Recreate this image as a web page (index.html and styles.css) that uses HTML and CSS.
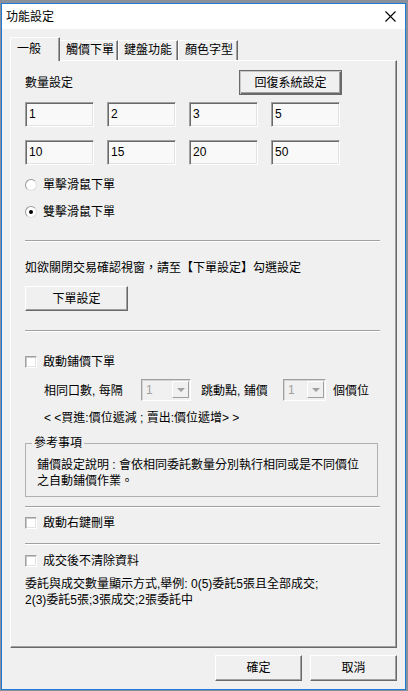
FILE: index.html
```html
<!DOCTYPE html>
<html lang="zh-Hant">
	<head>
		<meta charset="UTF-8" />
		<meta name="viewport" content="width=device-width, initial-scale=1.0" />
		<title>功能設定</title>
		<link rel="stylesheet" href="styles.css">
	</head>
	<body>
		<div class="window">
			<div class="titlebar">
				<span class="title">功能設定</span>
				<svg class="close" width="11" height="11" viewBox="0 0 11 11">
					<path d="M0.5 0.5 L10.5 10.5 M10.5 0.5 L0.5 10.5" stroke="#000" stroke-width="1.1" fill="none" />
				</svg>
			</div>

			<div class="client">
				<div class="tabs">
					<div class="tab active">一般</div>
					<div class="tab t2">觸價下單</div>
					<div class="tab t3">鍵盤功能</div>
					<div class="tab t4">顏色字型</div>
				</div>

				<div class="panel">
					<div class="qty-head">
						<span>數量設定</span>
						<button class="btn btn-default">回復系統設定</button>
					</div>
					<div class="qty-grid">
						<div class="edit">1</div>
						<div class="edit">2</div>
						<div class="edit">3</div>
						<div class="edit">5</div>
					</div>
					<div class="qty-grid row2">
						<div class="edit">10</div>
						<div class="edit">15</div>
						<div class="edit">20</div>
						<div class="edit">50</div>
					</div>

					<div class="option radio-first">
						<span class="radio"></span>
						<span>單擊滑鼠下單</span>
					</div>
					<div class="option radio-second">
						<span class="radio checked"></span>
						<span>雙擊滑鼠下單</span>
					</div>

					<div class="sep sep-1"></div>

					<div class="line confirm-note">如欲關閉交易確認視窗，請至【下單設定】勾選設定</div>
					<button class="btn btn-order">下單設定</button>

					<div class="sep sep-2"></div>

					<div class="option chk-first">
						<span class="check"></span>
						<span>啟動鋪價下單</span>
					</div>
					<div class="spread-row">
						<span class="lbl-a">相同口數, 每隔</span>
						<div class="combo c1">
							<span>1</span>
							<span class="arrow"></span>
						</div>
						<span class="lbl-b">跳動點, 鋪價</span>
						<div class="combo c2">
							<span>1</span>
							<span class="arrow"></span>
						</div>
						<span class="lbl-c">個價位</span>
					</div>
					<div class="line spread-hint">&lt; &lt;買進:價位遞減 ; 賣出:價位遞增&gt; &gt;</div>

					<fieldset class="group">
						<legend>參考事項</legend>
						<div class="line">鋪價設定說明 : 會依相同委託數量分別執行相同或是不同價位</div>
						<div class="line">之自動鋪價作業。</div>
					</fieldset>

					<div class="sep sep-3"></div>

					<div class="option chk-second">
						<span class="check"></span>
						<span>啟動右鍵刪單</span>
					</div>

					<div class="sep sep-4"></div>

					<div class="option chk-third">
						<span class="check"></span>
						<span>成交後不清除資料</span>
					</div>
					<div class="fill-note">
						<div class="line">委託與成交數量顯示方式,舉例: 0(5)委託5張且全部成交;</div>
						<div class="line">2(3)委託5張;3張成交;2張委託中</div>
					</div>
				</div>

				<div class="footer">
					<button class="btn btn-footer">確定</button>
					<button class="btn btn-footer">取消</button>
				</div>
			</div>
		</div>
	</body>
</html>
```

FILE: styles.css
```css
:root {
	--face: #f0f0f0;
	--light: #ffffff;
	--shadow: #a0a0a0;
	--dark: #696969;
	--border-blue: #1e7ad6;
}

body {
	margin: 0;
	padding: 3px 0 0 1px;
	background: #8a9099;
	font-family: 'Liberation Sans', 'Noto Sans CJK TC', sans-serif;
	font-size: 12px;
	color: #000;
}

.window {
	width: 405px;
	height: 687px;
	box-sizing: border-box;
	border: 1px solid var(--border-blue);
	background: var(--face);
	display: flex;
	flex-direction: column;
}

.titlebar {
	height: 25px;
	background: #fff;
	display: flex;
	align-items: center;
	justify-content: space-between;
	padding: 0 9px 0 4px;
	flex-shrink: 0;
}

.title {
	line-height: 16px;
	padding-top: 1px;
}

.client {
	padding: 8px 0 0 8px;
}

/* tabs */
.tabs {
	display: flex;
	align-items: flex-end;
	height: 23px;
}

.tab {
	box-sizing: border-box;
	height: 20px;
	line-height: 16px;
	padding: 1px 0 0 6px;
	border-top: 1px solid var(--light);
	border-left: 1px solid var(--light);
	border-right: 1px solid var(--dark);
	box-shadow: inset -1px 0 0 var(--shadow);
	background: var(--face);
}

.tab.active {
	width: 50px;
	height: 24px;
	padding: 3px 0 0 6px;
	margin-bottom: -1px;
	position: relative;
	z-index: 1;
}

.t2 {
	width: 58px;
	border-left: none;
	padding-left: 6px;
}

.t3 {
	width: 60px;
	padding-left: 5px;
}

.t4 {
	width: 60px;
	padding-left: 6px;
}

.panel {
	box-sizing: border-box;
	width: 387px;
	height: 588px;
	border-top: 1px solid var(--light);
	border-left: 1px solid var(--light);
	border-right: 1px solid var(--dark);
	border-bottom: 1px solid var(--dark);
	box-shadow: inset -1px -1px 0 var(--shadow);
	padding: 9px 0 0 14px;
}

.line {
	line-height: 16px;
	height: 16px;
	white-space: nowrap;
}

/* buttons */
.btn {
	font: inherit;
	color: #000;
	background: var(--face);
	box-sizing: border-box;
	border: none;
	padding: 0;
	border-top: 1px solid var(--light);
	border-left: 1px solid var(--light);
	border-right: 1px solid var(--dark);
	border-bottom: 1px solid var(--dark);
	box-shadow: inset -1px -1px 0 var(--shadow);
	line-height: 16px;
}

.btn-default {
	width: 103px;
	height: 25px;
	border: 1px solid #6a6a6a;
	box-shadow: inset 1px 1px 0 #c8c8c8, inset -1px -1px 0 var(--dark), inset -2px -2px 0 var(--shadow);
}

.btn-order {
	display: block;
	width: 103px;
	height: 25px;
	margin-top: 10px;
}

.qty-head {
	width: 317px;
	height: 25px;
	display: flex;
	align-items: center;
	justify-content: space-between;
	line-height: 16px;
}

.qty-grid {
	display: grid;
	grid-template-columns: 69px 69px 69px 69px;
	column-gap: 13px;
	margin-top: 7px;
}

.qty-grid.row2 {
	margin-top: 13px;
}

.edit {
	box-sizing: border-box;
	height: 25px;
	padding: 2px 0 0 3px;
	line-height: 18px;
	background: #f9f9f9;
	border-top: 1px solid var(--shadow);
	border-left: 1px solid var(--shadow);
	border-right: 1px solid var(--light);
	border-bottom: 1px solid var(--light);
	box-shadow: inset 1px 1px 0 var(--dark), inset -1px -1px 0 #e3e3e3;
}

/* radios and checkboxes */
.option {
	display: flex;
	align-items: center;
	gap: 6px;
	height: 16px;
	line-height: 16px;
}

.radio-first {
	margin-top: 12px;
}

.radio-second {
	margin-top: 11px;
}

.radio {
	box-sizing: border-box;
	width: 12px;
	height: 12px;
	border-radius: 50%;
	border: 1px solid #9a9a9a;
	border-right-color: #dcdcdc;
	border-bottom-color: #dcdcdc;
	background: #fff;
	display: flex;
	align-items: center;
	justify-content: center;
}

.radio.checked::after {
	content: '';
	width: 4px;
	height: 4px;
	border-radius: 50%;
	background: #000;
}

.check {
	box-sizing: border-box;
	width: 12px;
	height: 12px;
	background: #fff;
	border-top: 1px solid var(--shadow);
	border-left: 1px solid var(--shadow);
	border-right: 1px solid var(--light);
	border-bottom: 1px solid var(--light);
	box-shadow: inset 1px 1px 0 #c8c8c8, inset -1px -1px 0 #e3e3e3;
}

.sep {
	width: 355px;
	height: 0;
	border-top: 1px solid var(--shadow);
	border-bottom: 1px solid var(--light);
}

.sep-1 {
	margin-top: 20px;
}

.confirm-note {
	margin-top: 18px;
}

.sep-2 {
	margin-top: 19px;
}

.chk-first {
	margin-top: 22px;
}

/* spread order row */
.spread-row {
	display: flex;
	align-items: center;
	height: 23px;
	margin-top: 8px;
	padding-left: 19px;
	line-height: 16px;
}

.lbl-a {
	width: 97px;
	padding-top: 3px;
}

.lbl-b {
	width: 82px;
	margin-left: 10px;
	padding-top: 3px;
}

.lbl-c {
	margin-left: 7px;
	padding-top: 3px;
}

.combo {
	box-sizing: border-box;
	height: 22px;
	display: flex;
	align-items: center;
	justify-content: space-between;
	padding: 0 1px 0 4px;
	color: #a0a0a0;
	background: var(--face);
	border-top: 1px solid var(--shadow);
	border-left: 1px solid var(--shadow);
	border-right: 1px solid var(--light);
	border-bottom: 1px solid var(--light);
	box-shadow: inset 1px 1px 0 #d4d4d4;
}

.c1 {
	width: 50px;
}

.c2 {
	width: 43px;
}

.arrow {
	box-sizing: border-box;
	width: 17px;
	height: 17px;
	border-top: 1px solid var(--light);
	border-left: 1px solid var(--light);
	border-right: 1px solid var(--shadow);
	border-bottom: 1px solid var(--shadow);
	display: flex;
	align-items: center;
	justify-content: center;
}

.arrow::after {
	content: '';
	border-left: 4px solid transparent;
	border-right: 4px solid transparent;
	border-top: 4px solid #a0a0a0;
}

.spread-hint {
	margin-top: 9px;
	padding-left: 19px;
}

/* reference group box */
.group {
	box-sizing: border-box;
	width: 353px;
	margin: 9px 0 0 0;
	padding: 6px 0 7px 11px;
	border: 1px solid #b0b0b0;
	min-width: 0;
}

.group legend {
	padding: 0 2px;
	margin-left: -5px;
	line-height: 16px;
}

.sep-3 {
	margin-top: 9px;
}

.chk-second {
	margin-top: 7px;
}

.sep-4 {
	margin-top: 12px;
}

.chk-third {
	margin-top: 8px;
}

.fill-note {
	margin-top: 7px;
}

.footer {
	display: flex;
	justify-content: flex-end;
	gap: 8px;
	width: 387px;
	margin-top: 7px;
}

.btn-footer {
	width: 87px;
	height: 26px;
}
```
